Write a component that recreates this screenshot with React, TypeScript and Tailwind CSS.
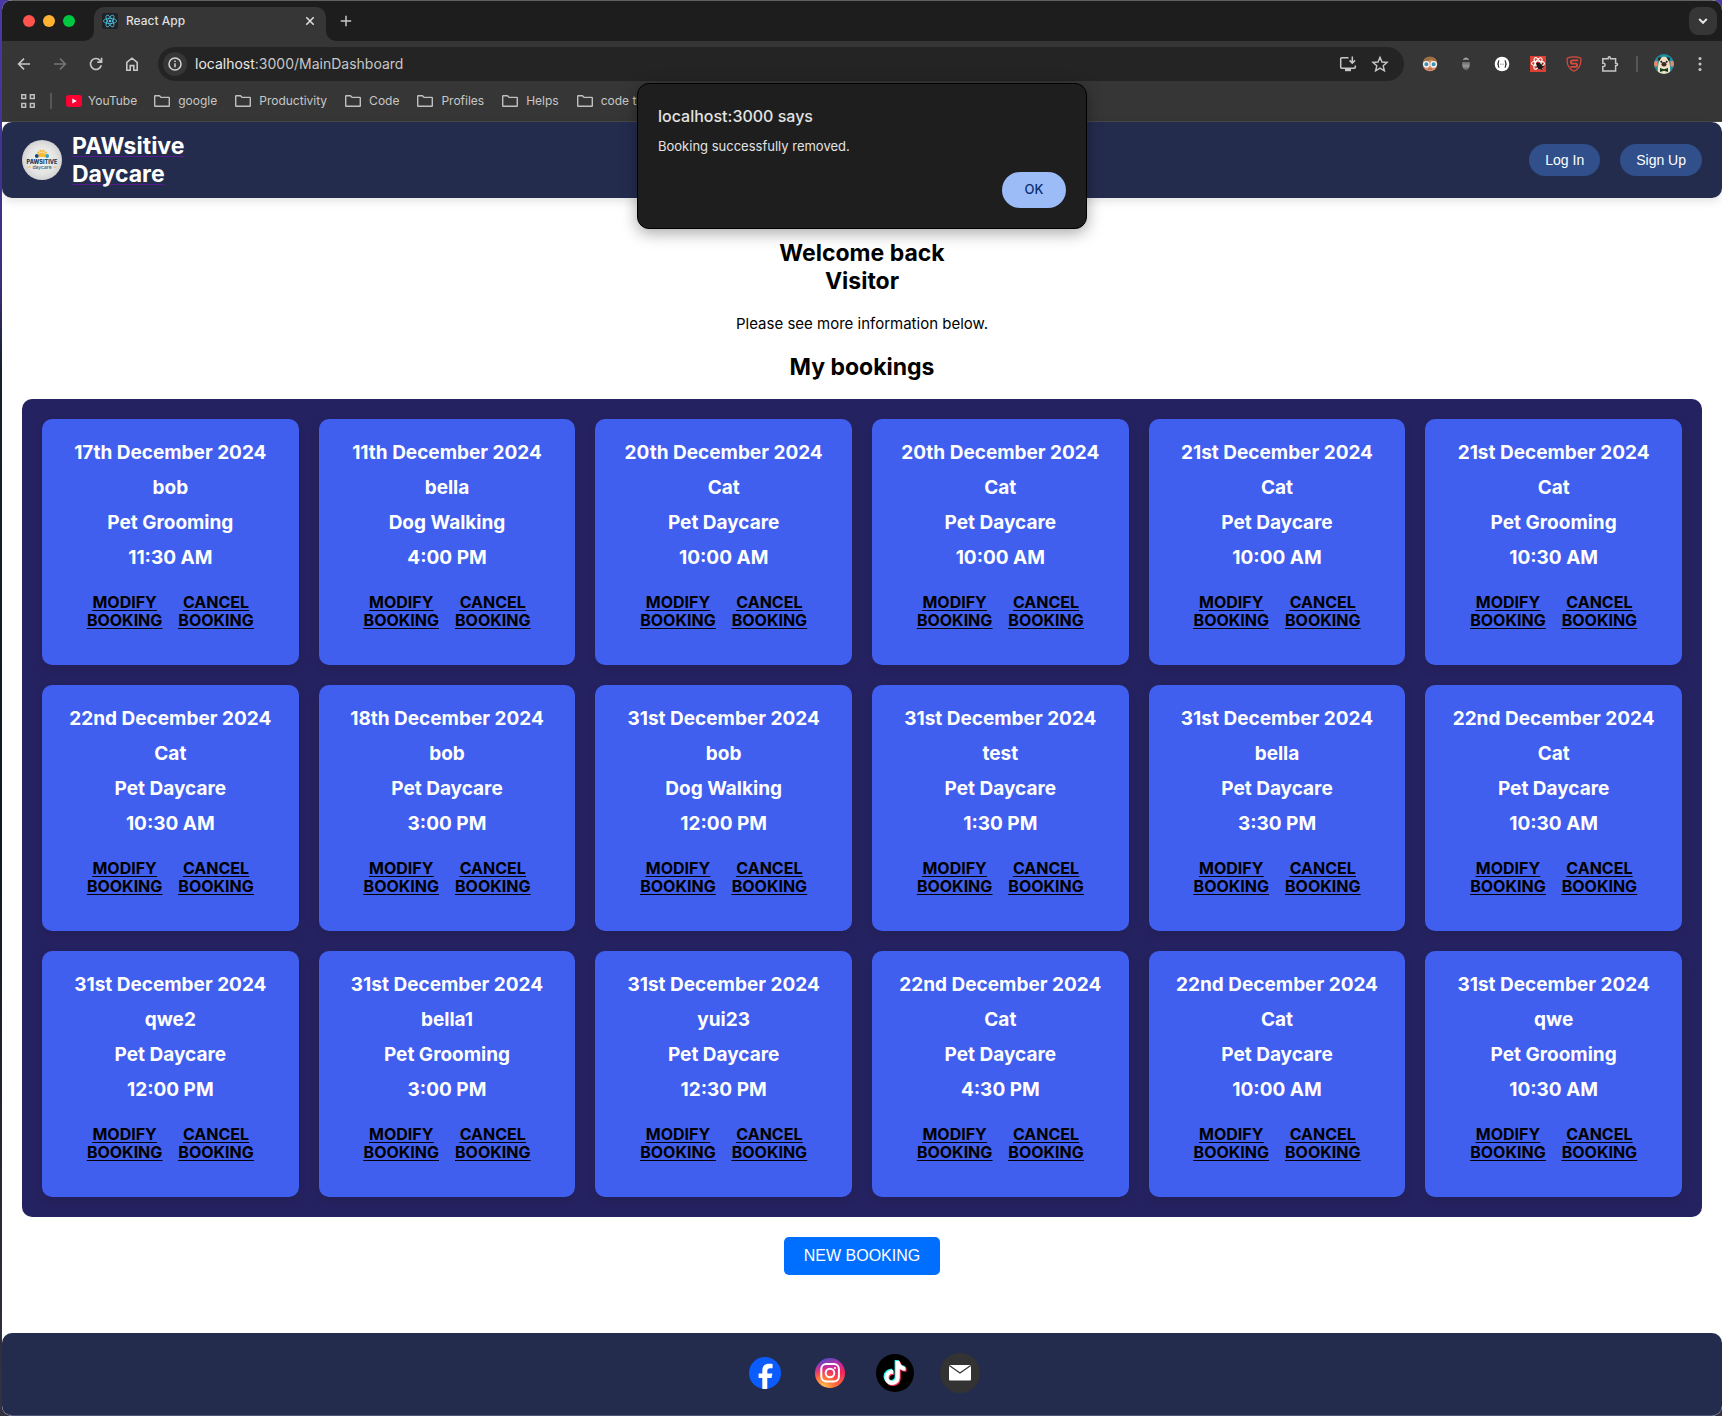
import React from 'react';
import type { ReactNode } from 'react';
import { FaTiktok } from 'react-icons/fa6';

type Booking = { date: string; pet: string; service: string; time: string };

const bookings: Booking[] = [
  { date: '17th December 2024', pet: 'bob', service: 'Pet Grooming', time: '11:30 AM' },
  { date: '11th December 2024', pet: 'bella', service: 'Dog Walking', time: '4:00 PM' },
  { date: '20th December 2024', pet: 'Cat', service: 'Pet Daycare', time: '10:00 AM' },
  { date: '20th December 2024', pet: 'Cat', service: 'Pet Daycare', time: '10:00 AM' },
  { date: '21st December 2024', pet: 'Cat', service: 'Pet Daycare', time: '10:00 AM' },
  { date: '21st December 2024', pet: 'Cat', service: 'Pet Grooming', time: '10:30 AM' },
  { date: '22nd December 2024', pet: 'Cat', service: 'Pet Daycare', time: '10:30 AM' },
  { date: '18th December 2024', pet: 'bob', service: 'Pet Daycare', time: '3:00 PM' },
  { date: '31st December 2024', pet: 'bob', service: 'Dog Walking', time: '12:00 PM' },
  { date: '31st December 2024', pet: 'test', service: 'Pet Daycare', time: '1:30 PM' },
  { date: '31st December 2024', pet: 'bella', service: 'Pet Daycare', time: '3:30 PM' },
  { date: '22nd December 2024', pet: 'Cat', service: 'Pet Daycare', time: '10:30 AM' },
  { date: '31st December 2024', pet: 'qwe2', service: 'Pet Daycare', time: '12:00 PM' },
  { date: '31st December 2024', pet: 'bella1', service: 'Pet Grooming', time: '3:00 PM' },
  { date: '31st December 2024', pet: 'yui23', service: 'Pet Daycare', time: '12:30 PM' },
  { date: '22nd December 2024', pet: 'Cat', service: 'Pet Daycare', time: '4:30 PM' },
  { date: '22nd December 2024', pet: 'Cat', service: 'Pet Daycare', time: '10:00 AM' },
  { date: '31st December 2024', pet: 'qwe', service: 'Pet Grooming', time: '10:30 AM' },
];

const folders = ['google', 'Productivity', 'Code', 'Profiles', 'Helps', 'code t'];

function Line({ children, size = 20, width = 1.6, className = '' }: { children: ReactNode; size?: number; width?: number; className?: string }) {
  return (
    <svg width={size} height={size} viewBox={`0 0 ${size} ${size}`} fill="none" stroke="currentColor" strokeWidth={width} className={className} aria-hidden="true">
      {children}
    </svg>
  );
}

function BarButton({ label, children, className = 'text-[#c7c7c7]' }: { label: string; children: ReactNode; className?: string }) {
  return (
    <button type="button" aria-label={label} className={`flex h-7 w-7 shrink-0 items-center justify-center rounded-full ${className}`}>
      {children}
    </button>
  );
}

function ReactFavicon() {
  return (
    <svg width="16" height="16" viewBox="0 0 16 16" fill="none" stroke="#4cc5e6" strokeWidth="0.8" aria-hidden="true">
      <rect width="16" height="16" rx="2" fill="#202124" stroke="none" />
      <ellipse cx="8" cy="8" rx="6.6" ry="2.6" />
      <ellipse cx="8" cy="8" rx="6.6" ry="2.6" transform="rotate(60 8 8)" />
      <ellipse cx="8" cy="8" rx="6.6" ry="2.6" transform="rotate(120 8 8)" />
      <circle cx="8" cy="8" r="1.3" fill="#4cc5e6" stroke="none" />
    </svg>
  );
}

function FolderIcon() {
  return (
    <svg width="16" height="12" viewBox="0 0 16 12" fill="none" stroke="#c0c0c0" strokeWidth="1.4" strokeLinejoin="round" aria-hidden="true">
      <path d="M.7 1.2c0-.3.2-.5.5-.5h4.3L7 2.4h7.8c.3 0 .5.2.5.5v7.9c0 .3-.2.5-.5.5H1.2a.5.5 0 0 1-.5-.5z" />
    </svg>
  );
}

function TabStrip() {
  return (
    <div className="flex h-10 items-end bg-[#1d1d1d] pr-[5px]">
      <div className="flex w-[92px] shrink-0 gap-2 self-center pl-[21px]">
        <button type="button" aria-label="Close window" className="h-3 w-3 rounded-full bg-[#ff544d]" />
        <button type="button" aria-label="Minimise window" className="h-3 w-3 rounded-full bg-[#ffb233]" />
        <button type="button" aria-label="Zoom window" className="h-3 w-3 rounded-full bg-[#00c941]" />
      </div>
      <div className="relative flex h-[34px] w-[232px] shrink-0 items-center rounded-t-[10px] bg-[#363636] px-2 pb-1.5">
        <svg className="absolute bottom-0 -left-2.5" width="10" height="10" viewBox="0 0 10 10" aria-hidden="true">
          <path d="M10 0v10H0A10 10 0 0 0 10 0z" fill="#363636" />
        </svg>
        <svg className="absolute -right-2.5 bottom-0" width="10" height="10" viewBox="0 0 10 10" aria-hidden="true">
          <path d="M0 0v10h10A10 10 0 0 1 0 0z" fill="#363636" />
        </svg>
        <ReactFavicon />
        <span className="ml-2 flex-1 text-xs font-medium text-[#dedede]">React App</span>
        <button type="button" aria-label="Close tab" className="flex h-4 w-4 items-center justify-center text-[#dedede]">
          <Line size={10} width={1.6}><path d="M1.3 1.3l7.4 7.4M8.7 1.3L1.3 8.7" /></Line>
        </button>
      </div>
      <button type="button" aria-label="New tab" className="mb-1.5 ml-1.5 flex h-7 w-7 items-center justify-center text-[#c7c7c7]">
        <Line size={12} width={1.5}><path d="M6 .8v10.4M.8 6h10.4" /></Line>
      </button>
      <button type="button" aria-label="Search tabs" className="mb-1.5 ml-auto flex h-7 w-7 items-center justify-center rounded-[9px] bg-[#363636] text-[#e3e3e3]">
        <Line size={10} width={2}><path d="M1.2 3l3.8 3.8L8.8 3" /></Line>
      </button>
    </div>
  );
}

function Extensions() {
  return (
    <>
      <BarButton label="Glasses extension">
        <svg width="16" height="16" viewBox="0 0 16 16" aria-hidden="true">
          <circle cx="8" cy="8" r="7.3" fill="#d9906a" />
          <path d="M1 6.4C1.600 2.800 4.500.7 8 .7s6.400 2.100 7 5.700C12.500 5.500 11 4.600 9.500 3.500 7 5 4 6 1 6.400z" fill="#9c6f42" />
          <circle cx="4.400" cy="8.300" r="2.700" fill="#3f8fae" stroke="#f2f6f7" strokeWidth="1.300" />
          <circle cx="11.600" cy="8.300" r="2.700" fill="#3f8fae" stroke="#f2f6f7" strokeWidth="1.300" />
          <path d="M6 13h4" stroke="#b5543f" strokeWidth="1" />
        </svg>
      </BarButton>
      <BarButton label="Incognito extension">
        <svg width="16" height="16" viewBox="0 0 16 16" aria-hidden="true">
          <defs>
            <linearGradient id="pod" x1="0" y1="0" x2="0" y2="1">
              <stop offset="0" stopColor="#6a6a6a" /><stop offset="0.5" stopColor="#9a9a9a" /><stop offset="1" stopColor="#555" />
            </linearGradient>
          </defs>
          <path d="M5 4.200C5.300 2.600 6.500 1.600 8 1.600s2.700 1 3 2.600c-2-.6-4-.6-6 0z" fill="#a0a0a0" />
          <path d="M4.200 6h7.600c.3 4-1 8.300-3.800 8.300S3.900 10 4.200 6z" fill="url(#pod)" />
        </svg>
      </BarButton>
      <BarButton label="JSON extension">
        <svg width="16" height="16" viewBox="0 0 16 16" fill="none" stroke="#333" strokeWidth="1.300" aria-hidden="true">
          <circle cx="8" cy="8" r="7.300" fill="#fff" stroke="none" />
          <path d="M5.300 4.700C4.300 4.700 4.500 5.600 4.400 6.700 4.400 7.500 4 8 3.300 8c.7 0 1.100.5 1.100 1.300.1 1.100-.1 2 .9 2M10.700 4.700c1 0 .8.9.9 2 0 .8.400 1.300 1.100 1.300-.7 0-1.100.5-1.100 1.300-.1 1.100.1 2-.9 2" />
          <path d="M6.200 8.200h3.600" stroke="#777" strokeDasharray="0.900 0.500" strokeWidth="0.900" />
        </svg>
      </BarButton>
      <BarButton label="React developer tools">
        <svg width="16" height="16" viewBox="0 0 16 16" fill="none" stroke="#fff" strokeWidth="1.100" aria-hidden="true">
          <rect width="16" height="16" fill="#dc3f34" stroke="none" />
          <ellipse cx="8" cy="7.500" rx="6.500" ry="2.500" />
          <ellipse cx="8" cy="7.500" rx="6.500" ry="2.500" transform="rotate(60 8 7.500)" />
          <ellipse cx="8" cy="7.500" rx="6.500" ry="2.500" transform="rotate(120 8 7.500)" />
          <g fill="#1b1b1b" stroke="#1b1b1b" strokeWidth="0.900">
            <ellipse cx="9.800" cy="10.400" rx="2.300" ry="3" transform="rotate(-40 9.800 10.400)" />
            <circle cx="7.600" cy="7.800" r="1" />
            <path d="M6.300 10.800l2-.6M7.500 13.200l1.500-1.400M9.800 6.400l-.3 1.500M12.800 7.600l-1.300 1M14 10.800l-1.600-.2M11.800 14l-.4-1.300" />
          </g>
        </svg>
      </BarButton>
      <BarButton label="Shield extension">
        <svg width="16" height="16" viewBox="0 0 16 16" fill="none" stroke="#dd4b3e" aria-hidden="true">
          <path d="M8 .9C5.500.9 3 1.400 1.100 2.300c-.4 6 1.300 10.700 6.900 12.900 5.600-2.200 7.300-6.900 6.900-12.900C13 1.400 10.500.9 8 .9z" strokeWidth="1.200" />
          <path d="M12.200 4.300H6.600c-2.300 0-2.300 3.300 0 3.300h3c2.200 0 2.200 3.300 0 3.300H4.400" strokeWidth="1.800" />
        </svg>
      </BarButton>
      <BarButton label="Extensions">
        <Line size={18} width={1.500}>
          <path d="M1.800 3.800h5.400V2.900a1.100 1.100 0 0 1 2.200 0v.9h5.200v4.400h.7a1.200 1.200 0 0 1 0 2.400h-.7v5.300H1.800v-4.300h.6a1.700 1.700 0 0 0 0-3.400h-.6z" />
        </Line>
      </BarButton>
    </>
  );
}

function ProfileAvatar() {
  return (
    <svg width="20" height="20" viewBox="0 0 20 20" aria-hidden="true">
      <defs><clipPath id="avatar"><circle cx="10" cy="10" r="10" /></clipPath></defs>
      <g clipPath="url(#avatar)">
        <rect width="20" height="20" fill="#1b8fa0" />
        <path d="M0 7h3.500v5.500H0zM16.500 7H20v5.500h-3.500z" fill="#e58a6c" />
        <path d="M4 20c-.6-5 0-8 .6-11C5 5 7 2.800 10 2.800S15 5 15.400 9c.6 3 1.200 6 .6 11z" fill="#efdfc0" />
        <path d="M4.200 3.800c1.200-.8 2.300-.8 3.200-.4L5 7.600C4.100 6.800 3.900 5 4.200 3.800zM15.800 3.800c-1.200-.8-2.300-.8-3.200-.4L15 7.600c.9-.8 1.100-2.600.8-3.800z" fill="#2a211e" />
        <ellipse cx="10" cy="10.300" rx="2.500" ry="2.200" fill="#3a2b26" />
        <circle cx="7.300" cy="7.800" r="1" fill="#171313" />
        <circle cx="12.700" cy="7.800" r="1" fill="#171313" />
        <path d="M6 14l4 1.300 4-1.300v4l-4-1.300L6 18z" fill="#123d1e" />
      </g>
    </svg>
  );
}

function Toolbar() {
  return (
    <div className="flex items-center gap-2 bg-[#363636] pt-1.5 pl-2">
      <BarButton label="Back">
        <Line size={16}><path d="M14 8H2.800M8 2.600L2.600 8 8 13.400" /></Line>
      </BarButton>
      <BarButton label="Forward" className="text-[#757575]">
        <Line size={16}><path d="M2 8h11.200M8 2.600L13.400 8 8 13.400" /></Line>
      </BarButton>
      <BarButton label="Reload">
        <Line size={16}><path d="M13.300 9.300A5.500 5.500 0 1 1 12 4.200l1.500 1.500M13.600 1.800v4.300H9.300" /></Line>
      </BarButton>
      <BarButton label="Home">
        <Line size={16}><path d="M2.800 14.200V6.300L8 2.200l5.200 4.100v7.900H9.800V9.600H6.200v4.600z" /></Line>
      </BarButton>
      <div className="ml-1 flex h-[34px] min-w-0 flex-1 items-center rounded-full bg-[#242424] pr-2.5 pl-[5px]">
        <button type="button" aria-label="Site information" className="flex h-6 w-6 shrink-0 items-center justify-center rounded-full bg-[#363636] text-[#d5d5d5]">
          <Line size={14} width={1.500}>
            <circle cx="7" cy="7" r="6" />
            <path d="M7 6.200v4M7 3.600v1.500" />
          </Line>
        </button>
        <div className="ml-2 flex-1 truncate text-sm leading-5 text-[#c7c7c7]">
          <span className="text-[#e8e8e8]">localhost</span>:3000/MainDashboard
        </div>
        <BarButton label="Install app">
          <Line size={18} width={1.500}>
            <path d="M9.500 2.800H2.600a.9.900 0 0 0-.9.900v8.600c0 .5.400.9.900.9h12.800c.5 0 .9-.4.900-.9V10.500M13.300 1.500v6.400M10.600 5.400l2.700 2.700L16 5.400" />
            <path d="M6 15h6" strokeWidth="2.400" />
          </Line>
        </BarButton>
        <div className="w-1" />
        <BarButton label="Bookmark this tab">
          <Line size={18} width={1.400}>
            <path d="M9 2.200l2 4.800 5.100.4-3.900 3.400 1.200 5L9 13.100l-4.400 2.700 1.200-5-3.900-3.400L7 7z" />
          </Line>
        </BarButton>
      </div>
      <div className="ml-1 flex items-center gap-2">
        <Extensions />
      </div>
      <div className="mx-1 h-4 w-0.5 bg-[#575757]" />
      <BarButton label="Profile"><ProfileAvatar /></BarButton>
      <BarButton label="Chrome menu">
        <svg width="4" height="16" viewBox="0 0 4 16" fill="currentColor" aria-hidden="true">
          <circle cx="2" cy="2.500" r="1.500" /><circle cx="2" cy="8" r="1.500" /><circle cx="2" cy="13.500" r="1.500" />
        </svg>
      </BarButton>
      <div className="w-0" />
    </div>
  );
}

function BookmarksBar() {
  return (
    <nav aria-label="Bookmarks" className="flex h-[41px] items-center border-b border-[#474747] bg-[#363636] pl-[19px] text-xs text-[#c7c7c7]">
      <button type="button" aria-label="All apps" className="text-[#c0c0c0]">
        <Line size={14} width={1.500}>
          <path d="M.8.800h3.800v3.800H.8zM9.400.800h3.800v3.800H9.400zM.8 9.400h3.800v3.800H.8zM9.400 9.400h3.800v3.800H9.400z" />
        </Line>
      </button>
      <div className="ml-[15px] h-4 w-0.5 bg-[#575757]" />
      <a href="#youtube" className="ml-3.5 flex items-center gap-1.5">
        <svg width="16" height="12" viewBox="0 0 16 12" aria-hidden="true">
          <rect width="16" height="12" rx="3" fill="#ff0033" />
          <path d="M6.300 3.400L10.800 6 6.300 8.600z" fill="#fff" />
        </svg>
        YouTube
      </a>
      <div className="ml-[17px] flex gap-[18px]">
        {folders.map((name) => (
          <a key={name} href={`#${name}`} className="flex items-center gap-2 whitespace-nowrap">
            <FolderIcon />
            {name}
          </a>
        ))}
      </div>
    </nav>
  );
}

function PawLogo() {
  return (
    <svg width="40" height="40" viewBox="0 0 40 40" aria-hidden="true" className="shrink-0">
      <defs>
        <radialGradient id="disc"><stop offset="0" stopColor="#f4f4f2" /><stop offset="0.7" stopColor="#e4e4e3" /><stop offset="1" stopColor="#d2d2d3" /></radialGradient>
      </defs>
      <circle cx="20" cy="20" r="20" fill="url(#disc)" />
      <g fill="#f7bb2f">
        <path d="M20 12.500c2.200 0 4.300 2 3.700 3.800-.5 1.400-2.200.8-3.700.8s-3.200.6-3.700-.8c-.6-1.800 1.500-3.800 3.700-3.800z" />
        <circle cx="16.300" cy="12.600" r="1.200" /><circle cx="18.600" cy="10.900" r="1.200" /><circle cx="21.400" cy="10.900" r="1.200" /><circle cx="23.700" cy="12.600" r="1.200" />
      </g>
      <circle cx="14.800" cy="16" r="1.900" fill="#1d4a72" />
      <circle cx="25.200" cy="16" r="1.900" fill="#2aa5c8" />
      <text x="20" y="24" textAnchor="middle" fontFamily="Inter, sans-serif" fontWeight="800" fontSize="5.500" fill="#123a5e">PAWSITIVE</text>
      <text x="20" y="29" textAnchor="middle" fontFamily="Inter, sans-serif" fontWeight="500" fontSize="5" fill="#2b5a80">daycare</text>
      <path d="M5.500 27H9M31 27h3.500" stroke="#f0b840" strokeWidth="0.900" />
    </svg>
  );
}

function SiteHeader() {
  return (
    <header className="flex items-center justify-between rounded-[10px] bg-[#242c4e] px-5 py-2.5 shadow-[0_4px_8px_rgba(0,0,0,0.1)]">
      <a href="#home" className="flex items-center gap-2.5">
        <PawLogo />
        <span className="w-min text-[23px] leading-7 font-bold text-white underline decoration-[#551a8b] decoration-1 underline-offset-2">PAWsitive Daycare</span>
      </a>
      <div className="flex gap-5 font-['Liberation_Sans',Arial,sans-serif] text-sm text-white">
        <button type="button" className="h-8 rounded-full bg-[#304f8b] px-4">Log In</button>
        <button type="button" className="h-8 rounded-full bg-[#304f8b] px-4">Sign Up</button>
      </div>
    </header>
  );
}

function BookingCard({ booking }: { booking: Booking }) {
  return (
    <article className="flex flex-col items-center rounded-[10px] bg-[#405fef] px-5 pt-[23px] pb-9 text-center shadow-[0_4px_8px_rgba(0,0,0,0.1)]">
      <div className="flex flex-col gap-[13px] text-[19px] leading-[22px] font-bold text-white">
        <h3>{booking.date}</h3>
        <p>{booking.pet}</p>
        <p>{booking.service}</p>
        <p>{booking.time}</p>
      </div>
      <div className="mt-6 flex gap-4 text-base leading-[18px] font-bold text-black underline underline-offset-2">
        <a href="#modify" className="w-min">MODIFY BOOKING</a>
        <a href="#cancel" className="w-min">CANCEL BOOKING</a>
      </div>
    </article>
  );
}

function AlertDialog() {
  return (
    <div role="alertdialog" aria-labelledby="alert-title" aria-describedby="alert-text" className="absolute top-[83px] left-1/2 z-10 flex w-[450px] -translate-x-1/2 flex-col rounded-xl border border-black bg-[#1e1e1e] px-5 pt-[22px] pb-5 text-[#e3e3e3] shadow-[0_4px_16px_rgba(0,0,0,0.35)]">
      <h2 id="alert-title" className="text-base leading-5 font-medium">localhost:3000 says</h2>
      <p id="alert-text" className="mt-2.5 text-[13px] leading-5">Booking successfully removed.</p>
      <button type="button" className="mt-4 h-9 w-16 self-end rounded-full bg-[#9bbcf7] text-[13px] font-medium text-[#0a2f70]">OK</button>
    </div>
  );
}

function TikTokGlyph() {
  return (
    <span className="relative flex h-[38px] w-[38px] items-center justify-center rounded-full bg-black">
      <FaTiktok size={24} color="#25f4ee" className="absolute top-1.5 left-1.5" />
      <FaTiktok size={24} color="#fe2c55" className="absolute top-2 left-2" />
      <FaTiktok size={24} color="#ffffff" className="absolute top-[7px] left-[7px]" />
    </span>
  );
}

function SiteFooter() {
  return (
    <footer className="mt-[57px] flex justify-center gap-[25px] rounded-[10px] border-b border-[#50557a] bg-[#242c4e] pt-5 pb-[22px]">
      <a href="#facebook" aria-label="Facebook" className="flex h-10 w-10 items-center justify-center">
        <svg width="32" height="32" viewBox="0 0 32 32" aria-hidden="true">
          <circle cx="16" cy="16" r="16" fill="#0a5cff" />
          <path d="M13.300 31.800V21H9.600v-4.600h3.700v-2.600c0-4.800 2.300-7.100 6.900-7.100 1.200 0 2.400.2 3.400.4v4.200c-.8-.1-1.500-.1-2.300-.1-2.200 0-3 .9-3 3v2.200h5.100L22.500 21h-4.200v10.800a16 16 0 0 1-5 0z" fill="#fff" />
        </svg>
      </a>
      <a href="#instagram" aria-label="Instagram" className="flex h-10 w-10 items-center justify-center">
        <svg width="30" height="30" viewBox="0 0 30 30" fill="none" stroke="#fff" strokeWidth="2" aria-hidden="true">
          <defs>
            <linearGradient id="igBase" x1="0.300" y1="0" x2="0.600" y2="1">
              <stop offset="0" stopColor="#4a4fc4" /><stop offset="0.300" stopColor="#c32aa3" /><stop offset="0.600" stopColor="#f5245c" /><stop offset="1" stopColor="#fa6a3c" />
            </linearGradient>
            <radialGradient id="igGlow" cx="0.250" cy="1" r="0.750">
              <stop offset="0" stopColor="#ffd65a" /><stop offset="0.500" stopColor="#ff7a35" stopOpacity="0.850" /><stop offset="1" stopColor="#ff4050" stopOpacity="0" />
            </radialGradient>
          </defs>
          <circle cx="15" cy="15" r="15" fill="url(#igBase)" stroke="none" />
          <circle cx="15" cy="15" r="15" fill="url(#igGlow)" stroke="none" />
          <rect x="6.300" y="6" width="17.600" height="17.600" rx="5" />
          <circle cx="15" cy="15" r="4.300" />
          <circle cx="19.900" cy="10" r="1.100" fill="#fff" stroke="none" />
        </svg>
      </a>
      <a href="#tiktok" aria-label="TikTok" className="flex h-10 w-10 items-center justify-center"><TikTokGlyph /></a>
      <a href="#mail" aria-label="Email" className="flex h-10 w-10 items-center justify-center">
        <svg width="40" height="40" viewBox="0 0 40 40" aria-hidden="true">
          <circle cx="20" cy="20" r="20" fill="#333" />
          <rect x="9" y="12" width="22" height="15.500" rx="1" fill="#fff" />
          <path d="M9.300 12.600L20 20l10.700-7.400" fill="none" stroke="#333" strokeWidth="1.200" />
        </svg>
      </a>
    </footer>
  );
}

export default function App() {
  return (
    <div className="min-h-screen bg-[linear-gradient(to_bottom,#4a3aa8_0%,#3a2f7c_20%,#16202c_26%,#101820_60%,#34323f_100%)] pl-0.5 font-[Inter,'Noto_Sans',sans-serif]">
      <div className="relative flex min-h-screen flex-col overflow-hidden rounded-[10px] bg-white">
        <div className="border-t border-[#606060]">
          <TabStrip />
          <Toolbar />
          <BookmarksBar />
        </div>
        <AlertDialog />
        <SiteHeader />
        <main className="flex flex-1 flex-col items-center px-5 pt-[41px] text-black">
          <h1 className="w-min text-center text-[23px] leading-7 font-bold"><span className="whitespace-nowrap">Welcome back</span> Visitor</h1>
          <p className="mt-5 text-[15px] leading-[18px]">Please see more information below.</p>
          <h2 className="mt-5 text-[23px] leading-7 font-bold">My bookings</h2>
          <section aria-label="My bookings" className="mt-[18px] grid w-full grid-cols-6 gap-5 rounded-[10px] bg-[#252261] p-5">
            {bookings.map((booking, index) => (
              <BookingCard key={index} booking={booking} />
            ))}
          </section>
          <button type="button" className="mt-5 rounded-[5px] bg-[#006fff] px-5 py-[9px] font-['Liberation_Sans',Arial,sans-serif] text-base leading-5 text-white">NEW BOOKING</button>
        </main>
        <SiteFooter />
      </div>
    </div>
  );
}
